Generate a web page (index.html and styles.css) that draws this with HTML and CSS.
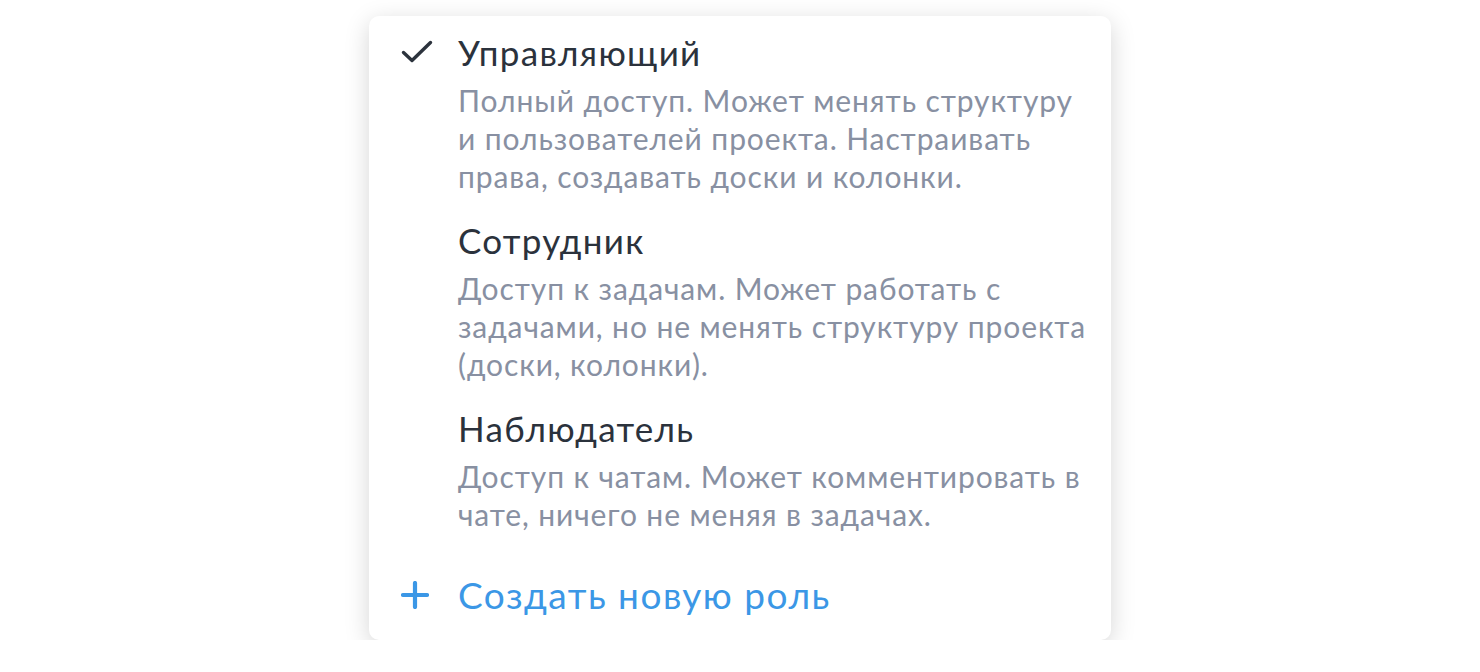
FILE: index.html
```html
<!DOCTYPE html>
<html lang="ru">
<head>
    <meta charset="UTF-8">
    <meta name="viewport" content="width=device-width, initial-scale=1.0">
    <title>Роли</title>
    <link rel="stylesheet" href="styles.css">
</head>
<body>
    <div class="role-menu">
        <div class="role-item selected">
            <span class="role-icon">
                <svg width="32" height="24" viewBox="0 0 32 24"><path d="M2.5 12.5 L11 20.5 L29.5 2.5" fill="none" stroke="#2c333d" stroke-width="3.4" stroke-linecap="round" stroke-linejoin="round"/></svg>
            </span>
            <div class="role-title">Управляющий</div>
            <div class="role-desc">Полный доступ. Может менять структуру и пользователей проекта. Настраивать права, создавать доски и колонки.</div>
        </div>

        <div class="role-item">
            <span class="role-icon"></span>
            <div class="role-title">Сотрудник</div>
            <div class="role-desc">Доступ к задачам. Может работать с задачами, но не менять структуру проекта (доски, колонки).</div>
        </div>

        <div class="role-item">
            <span class="role-icon"></span>
            <div class="role-title">Наблюдатель</div>
            <div class="role-desc">Доступ к чатам. Может комментировать в чате, ничего не меняя в задачах.</div>
        </div>

        <div class="role-create">
            <span class="role-icon">
                <svg width="28" height="28" viewBox="0 0 28 28"><path d="M14 2 V26 M2 14 H26" fill="none" stroke="#3b97e6" stroke-width="4.2" stroke-linecap="round"/></svg>
            </span>
            <span class="create-label">Создать новую роль</span>
        </div>
    </div>
</body>
</html>
```

FILE: styles.css
```css
body {
    margin: 0;
    background-color: #ffffff;
    font-family: Lato, "Noto Sans", sans-serif;
    display: flex;
    justify-content: center;
    padding-top: 16px;
}

.role-menu {
    width: 742px;
    box-sizing: border-box;
    padding: 16px 20px 23px 32px;
    background-color: #ffffff;
    border-radius: 10px;
    box-shadow: 0 6px 24px rgba(0, 0, 0, 0.17);
}

.role-item {
    display: grid;
    grid-template-columns: 57px 1fr;
    margin-bottom: 25px;
}

.role-icon {
    display: flex;
    align-items: center;
    height: 40px;
}

.role-title {
    font-size: 35px;
    line-height: 40px;
    letter-spacing: 1.3px;
    color: #2b323c;
}

.role-desc {
    grid-column: 2;
    margin-top: 9px;
    font-size: 30px;
    line-height: 38px;
    letter-spacing: 0.9px;
    color: #8890a2;
}

.role-create {
    display: grid;
    grid-template-columns: 57px 1fr;
    align-items: center;
    margin-top: 40px;
}

.role-create .role-icon {
    height: 44px;
}

.create-label {
    font-size: 37px;
    line-height: 44px;
    letter-spacing: 1.5px;
    color: #3b97e6;
}
```
